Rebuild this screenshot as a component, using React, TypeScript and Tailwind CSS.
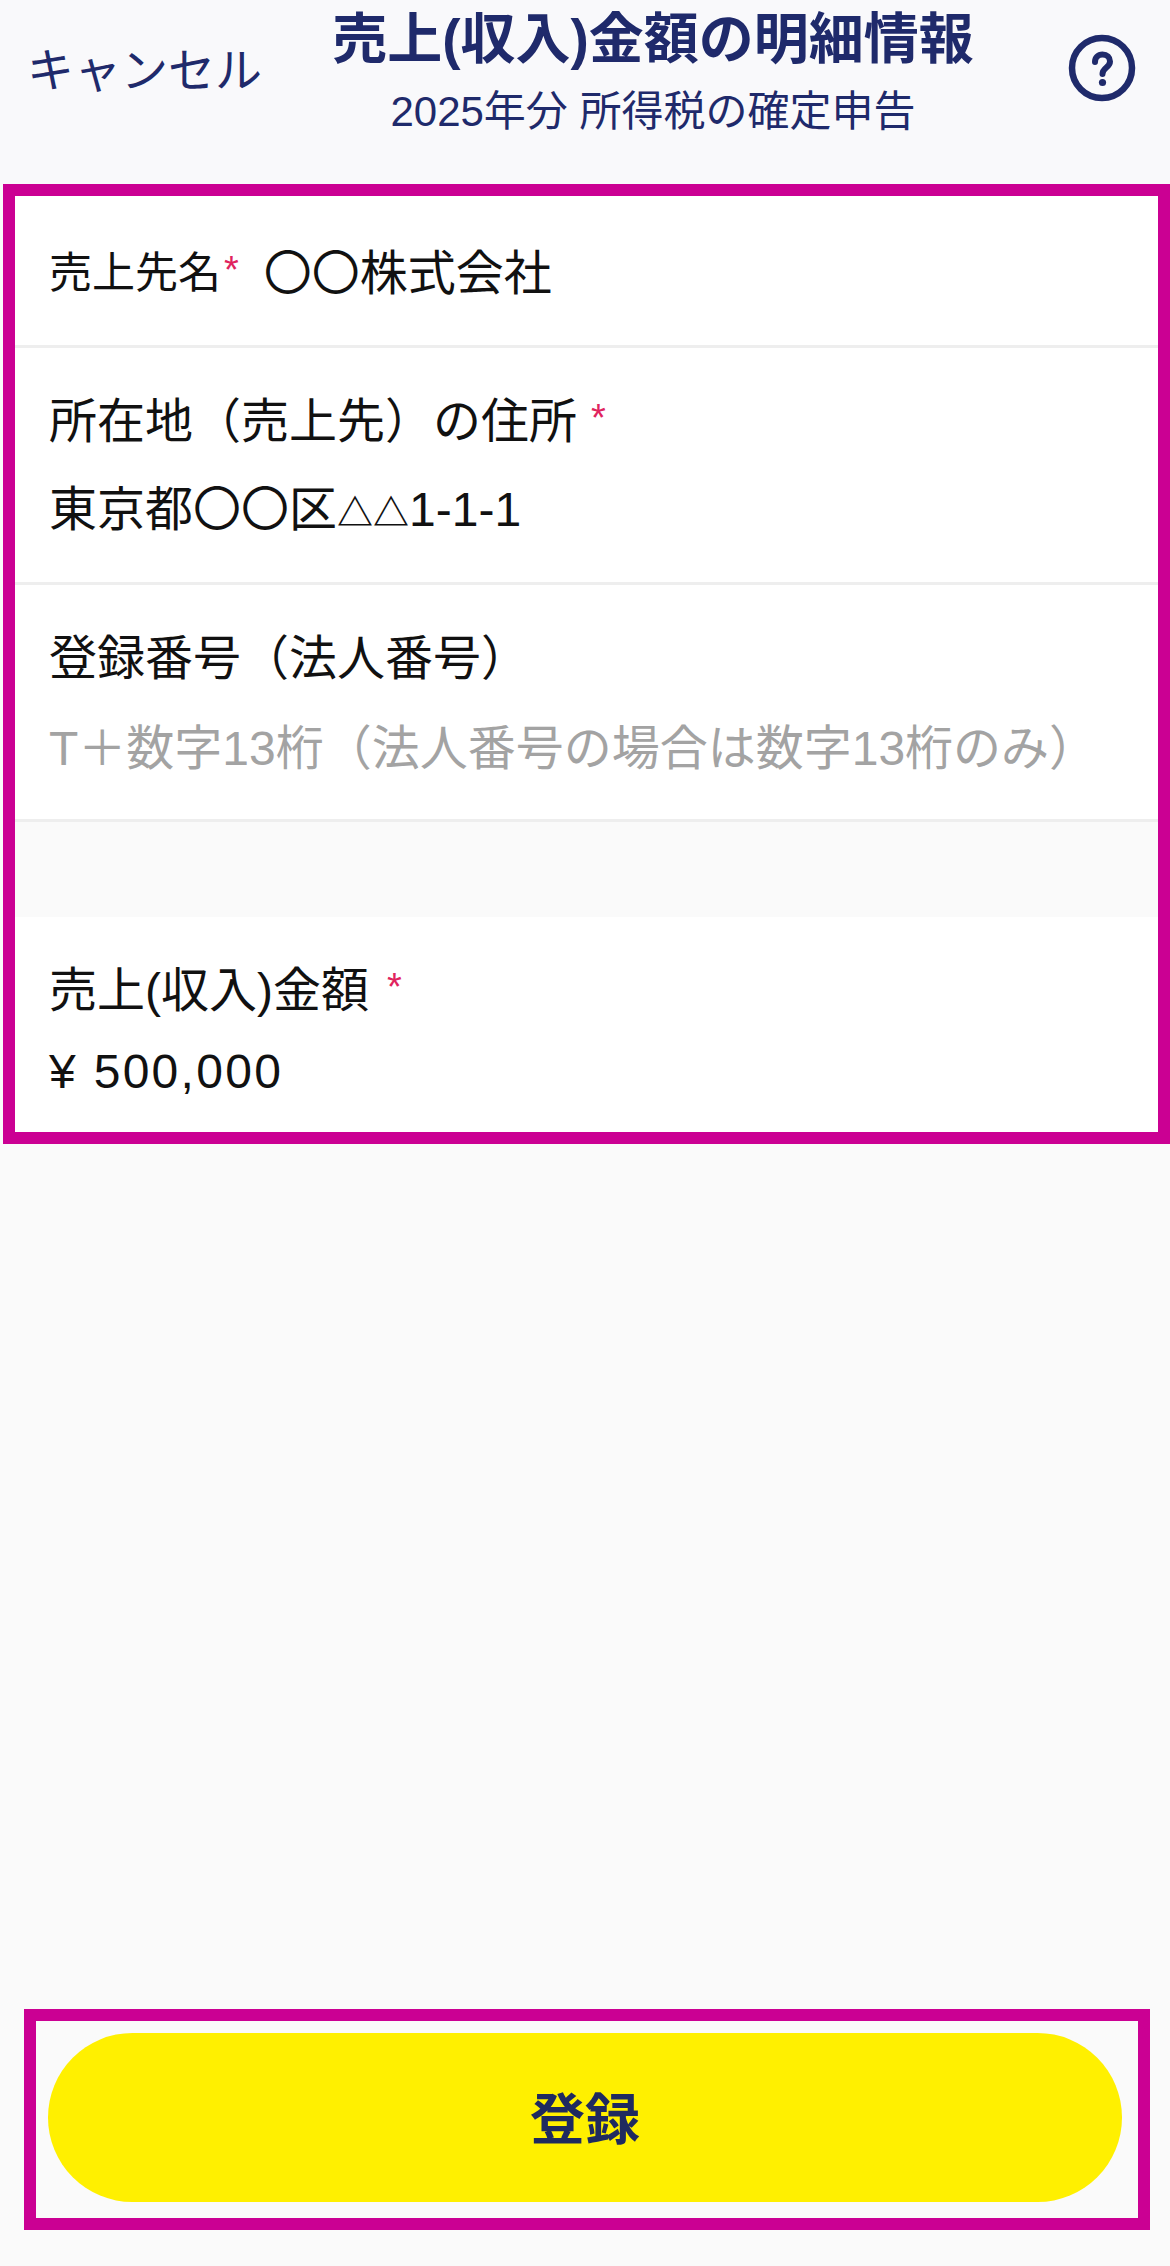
import React from "react";

const Req = ({ className = "" }: { className?: string }) => (
  <span className={"text-[#e0245e] text-[38px] leading-none " + className}>*</span>
);

function QuestionIcon() {
  return (
    <svg width="68" height="68" viewBox="0 0 68 68" fill="none" aria-hidden="true">
      <circle cx="34" cy="34" r="30" stroke="#1f2a6b" strokeWidth="6.5" />
      <path
        d="M27 28c0-4.500 3-7.500 7.500-7.500s7.500 3 7.500 7c0 6-7.500 6-7.500 12.500"
        stroke="#1f2a6b"
        strokeWidth="6"
        strokeLinecap="round"
      />
      <circle cx="34.500" cy="48.500" r="3.600" fill="#1f2a6b" />
    </svg>
  );
}

export default function App() {
  return (
    <div className="w-[1170px] h-[2266px] bg-[#fafafa] flex flex-col font-['Liberation_Sans','Noto_Sans_CJK_JP',sans-serif] text-[#111111]">
      <header className="h-[184px] shrink-0 flex items-start justify-between pl-[27px] pr-[34px] bg-[#f9f9fb]">
        <button className="mt-[41px] text-[47px] leading-[60px] text-[#1f2a6b]">キャンセル</button>
        <div className="flex flex-col items-center text-[#1f2a6b] mr-[24px]">
          <h1 className="mt-[4px] text-[55px] leading-[70px] font-bold">売上(収入)金額の明細情報</h1>
          <p className="mt-[13px] text-[42px] leading-[50px]">2025年分 所得税の確定申告</p>
        </div>
        <div className="mt-[34px]">
          <QuestionIcon />
        </div>
      </header>

      <section className="ml-[3px] w-[1167px] h-[960px] shrink-0 border-[12px] border-[#cb0093] bg-white flex flex-col">
        <div className="h-[152px] border-b-[3px] border-[#eeeeee] pl-[34px] flex items-center pt-[6px]">
          <span className="text-[43px]">売上先名</span>
          <Req className="ml-[3px] -mt-[8px]" />
          <span className="ml-[25px] text-[48px]">〇〇株式会社</span>
        </div>
        <div className="h-[237px] border-b-[3px] border-[#eeeeee] pl-[34px] pt-[44px] text-[48px] leading-[60px]">
          <div className="flex items-center">
            <span>所在地（売上先）の住所</span>
            <Req className="ml-[14px] -mt-[8px]" />
          </div>
          <div className="mt-[28px]">東京都〇〇区<span className="text-[36px] font-bold">△△</span>1-1-1</div>
        </div>
        <div className="h-[237px] border-b-[3px] border-[#eeeeee] pl-[34px] pt-[44px] text-[48px] leading-[60px]">
          <div>登録番号（法人番号）</div>
          <div className="mt-[30px] text-[#a3a3a3]">T＋数字13桁（法人番号の場合は数字13桁のみ）</div>
        </div>
        <div className="h-[95px] bg-[#fafafa]" />
        <div className="flex-1 pl-[34px] pt-[44px] text-[48px] leading-[60px]">
          <div className="flex items-center">
            <span>売上(収入)金額</span>
            <Req className="ml-[18px] -mt-[8px]" />
          </div>
          <div className="mt-[21px] tracking-[2.3px]">¥ 500,000</div>
        </div>
      </section>

      <footer className="mt-auto mb-[36px] ml-[24px] w-[1126px] h-[221px] border-[12px] border-[#cb0093] pl-[12px] pr-[16px] pt-[12px] pb-[16px] bg-[#fafafa]">
        <button className="w-full h-full rounded-full bg-[#fff000] text-[#1f2a5f] text-[55px] font-bold pt-[5px]">登録</button>
      </footer>
    </div>
  );
}
